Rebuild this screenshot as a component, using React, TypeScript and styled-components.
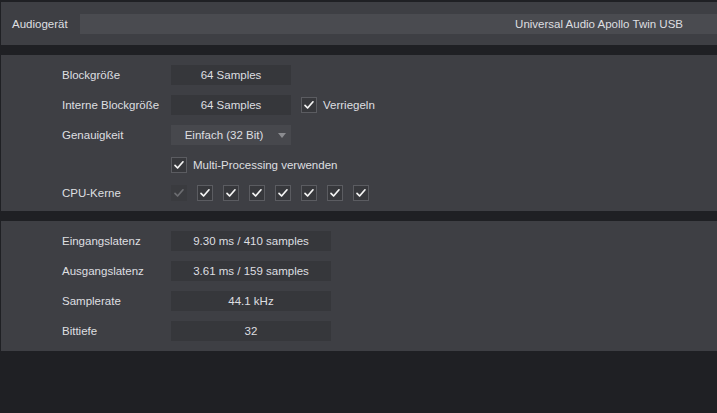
import React from 'react';
import styled, { createGlobalStyle } from 'styled-components';

const GlobalStyle = createGlobalStyle`
    html, body {
        margin: 0;
        padding: 0;
        background: #1f2024;
        font-family: "Liberation Sans", Arial, sans-serif;
        font-size: 11.5px;
        color: #dedfe1;
    }
`

const Page = styled.div`
    display: flex;
    flex-direction: column;
    gap: 10px;
    padding: 2px 0 0 1px;
    width: 716px;
    height: 411px;
`

const Panel = styled.section`
    background: #3e3f44;
    display: flex;
    flex-direction: column;
    gap: 10px;
    padding: 10px 0 10px 61px;
`

const DevicePanel = styled.section`
    background: #3e3f44;
    display: flex;
    align-items: center;
    height: 43px;
    padding-left: 11px;
`

const DeviceLabel = styled.span`
    width: 68px;
`

const DeviceField = styled.div`
    flex: 1;
    height: 20px;
    line-height: 20px;
    background: #4a4b50;
    text-align: right;
    padding-right: 34px;
`

const Row = styled.div<{ $h?: number }>`
    display: flex;
    align-items: center;
    height: ${p => p.$h ?? 20}px;
`

const Label = styled.span`
    width: 109px;
    flex-shrink: 0;
`

const Field = styled.div<{ $w: number }>`
    width: ${p => p.$w}px;
    height: 20px;
    line-height: 20px;
    background: #36373b;
    text-align: center;
`

const Select = styled.div`
    position: relative;
    width: 120px;
    height: 20px;
    line-height: 20px;
    background: #47484d;
    text-align: center;
    padding-right: 14px;
    box-sizing: border-box;
`

const Arrow = styled.span`
    position: absolute;
    right: 5px;
    top: 8px;
    width: 0;
    height: 0;
    border-left: 4px solid transparent;
    border-right: 4px solid transparent;
    border-top: 5px solid #8b8c90;
`

const Box = styled.span<{ $disabled?: boolean }>`
    display: inline-flex;
    align-items: center;
    justify-content: center;
    width: 16px;
    height: 16px;
    box-sizing: border-box;
    border: 1px solid ${p => (p.$disabled ? 'transparent' : '#5b5c61')};
    background: ${p => (p.$disabled ? '#3a3b3f' : '#37383c')};
    color: ${p => (p.$disabled ? '#6c6d71' : '#f4f4f4')};
    flex-shrink: 0;
`

const CheckLabel = styled.label`
    display: flex;
    align-items: center;
    gap: 6px;
`

const Cores = styled.div`
    display: flex;
    gap: 10px;
`

const Spacer = styled.span<{ $w: number }>`
    width: ${p => p.$w}px;
    flex-shrink: 0;
`

const Check: React.FC<{ disabled?: boolean }> = ({ disabled }) => (
    <Box $disabled={disabled}>
        <svg width="12" height="12" viewBox="0 0 12 12">
            <path d="M2 6.3 L4.6 9 L10 2.8" fill="none" stroke="currentColor" strokeWidth="1.7" strokeLinecap="round" strokeLinejoin="round" />
        </svg>
    </Box>
)

const App: React.FC = () => {
    const latency = [
        { label: 'Eingangslatenz', value: '9.30 ms / 410 samples' },
        { label: 'Ausgangslatenz', value: '3.61 ms / 159 samples' },
        { label: 'Samplerate', value: '44.1 kHz' },
        { label: 'Bittiefe', value: '32' },
    ];

    return (
        <Page>
            <GlobalStyle />
            <DevicePanel>
                <DeviceLabel>Audiogerät</DeviceLabel>
                <DeviceField>Universal Audio Apollo Twin USB</DeviceField>
            </DevicePanel>

            <Panel>
                <Row>
                    <Label>Blockgröße</Label>
                    <Field $w={120}>64 Samples</Field>
                </Row>
                <Row>
                    <Label>Interne Blockgröße</Label>
                    <Field $w={120}>64 Samples</Field>
                    <Spacer $w={10} />
                    <CheckLabel>
                        <Check />
                        Verriegeln
                    </CheckLabel>
                </Row>
                <Row>
                    <Label>Genauigkeit</Label>
                    <Select>
                        Einfach (32 Bit)
                        <Arrow />
                    </Select>
                </Row>
                <Row>
                    <Spacer $w={109} />
                    <CheckLabel>
                        <Check />
                        Multi-Processing verwenden
                    </CheckLabel>
                </Row>
                <Row $h={16}>
                    <Label>CPU-Kerne</Label>
                    <Cores>
                        {Array.from({ length: 8 }).map((_, i) => (
                            <Check key={i} disabled={i === 0} />
                        ))}
                    </Cores>
                </Row>
            </Panel>

            <Panel>
                {latency.map(item => (
                    <Row key={item.label}>
                        <Label>{item.label}</Label>
                        <Field $w={160}>{item.value}</Field>
                    </Row>
                ))}
            </Panel>
        </Page>
    )
}

export default App;
